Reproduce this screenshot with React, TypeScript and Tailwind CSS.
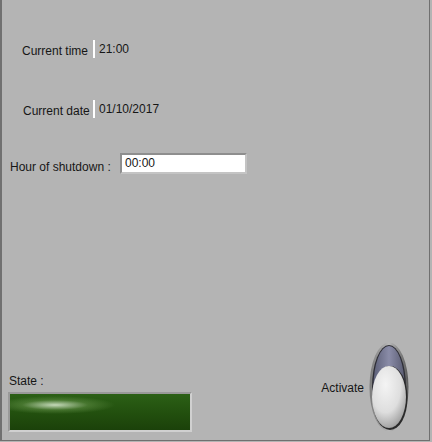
const FONT = "font-['Liberation_Sans',Arial,sans-serif]";

function Toggle() {
	return (
		<svg width="40" height="90" viewBox="0 0 40 90">
			<defs>
				<linearGradient id="well" x1="0" y1="0" x2="1" y2="0">
					<stop offset="0" stopColor="#5d6078" />
					<stop offset="0.5" stopColor="#8a8ca8" />
					<stop offset="1" stopColor="#5a5c72" />
				</linearGradient>
				<radialGradient id="knob" cx="0.4" cy="0.3" r="0.75">
					<stop offset="0" stopColor="#f4f4f4" />
					<stop offset="0.6" stopColor="#dedede" />
					<stop offset="1" stopColor="#9a9a9a" />
				</radialGradient>
				<linearGradient id="rim" x1="0" y1="0" x2="1" y2="0">
					<stop offset="0" stopColor="#7a7a7a" />
					<stop offset="0.5" stopColor="#b8b8b8" />
					<stop offset="1" stopColor="#5a5a5a" />
				</linearGradient>
			</defs>
			<ellipse cx="20" cy="45" rx="19.5" ry="44.5" fill="url(#rim)" />
			<ellipse cx="20" cy="45" rx="17" ry="42" fill="#2e2e36" />
			<ellipse cx="20" cy="44" rx="15.5" ry="40" fill="url(#well)" />
			<ellipse cx="21" cy="56" rx="17.5" ry="32" fill="#2a2a2a" />
			<ellipse cx="20" cy="55" rx="17" ry="31" fill="url(#knob)" />
		</svg>
	);
}

export default function App() {
	return (
		<div className={`h-[442px] w-[432px] bg-[#b4b4b4] ${FONT} text-[12px] text-[#161616]`}>
			<div className="flex h-[441px] w-[430px] flex-col border-b-[1px] border-l-2 border-r-[1px] border-[#707070] pt-[40px]">
				{/* current time */}
				<div className="flex h-[18px] items-start pl-[20px]">
					<span className="w-[71px] pt-[4px] leading-[14px]">Current time</span>
					<span className="h-[18px] w-[2px] bg-white" />
					<span className="ml-[4px] pt-[1px] leading-[16px]">21:00</span>
				</div>

				{/* current date */}
				<div className="mt-[42px] flex h-[18px] items-start pl-[21px]">
					<span className="w-[70px] pt-[4px] leading-[14px]">Current date</span>
					<span className="h-[18px] w-[2px] bg-white" />
					<span className="ml-[4px] pt-[1px] leading-[16px]">01/10/2017</span>
				</div>

				{/* shutdown */}
				<div className="mt-[35px] flex h-[21px] items-center pl-[8px]">
					<span className="w-[110px] pt-[7px] leading-[14px]">Hour of shutdown :</span>
					<div className="h-[21px] w-[127px] border-2 border-b-[#c4c4c4] border-l-[#8e8e8e] border-r-[#c4c4c4] border-t-[#8e8e8e] bg-white pl-[3px] leading-[17px]">
						00:00
					</div>
				</div>

				{/* bottom */}
				<div className="mt-auto flex items-end justify-between pb-[8px] pl-[6px] pr-[20px]">
					<div className="flex flex-col">
						<span className="pl-[1px] leading-[14px]">State :</span>
						<div className="mt-[4px] h-[40px] w-[184px] border-2 border-b-[#d0d0d0] border-l-[#999999] border-r-[#d0d0d0] border-t-[#999999] bg-[#122a08]">
							<div className="h-full w-full bg-[radial-gradient(ellipse_60px_9px_at_45px_11px,rgba(225,240,215,0.85),rgba(130,175,100,0.35)_55%,transparent),linear-gradient(to_bottom,#2c6016,#224f0e_55%,#1b410a)]" />
						</div>
					</div>
					<div className="flex items-center">
						<span className="mr-[5px] pt-[2px] leading-[14px]">Activate</span>
						<Toggle />
					</div>
				</div>
			</div>
		</div>
	);
}
